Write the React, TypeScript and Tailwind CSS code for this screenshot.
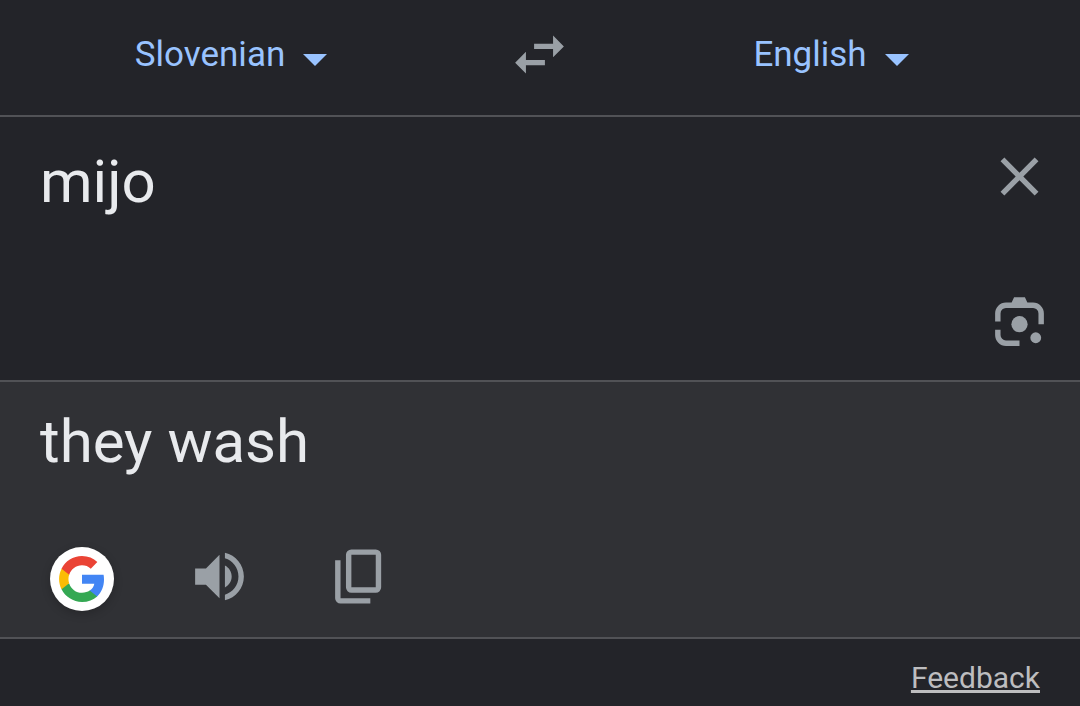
import { useState } from "react";

const LANGUAGES = ["English", "Slovenian", "Spanish", "German", "Croatian"];

interface LanguageSelectProps {
  label: string;
  value: string;
  onChange: (value: string) => void;
}

/** Borderless language drop-down with a solid caret */
function LanguageSelect({ label, value, onChange }: LanguageSelectProps) {
  return (
    <label className="flex flex-1 items-center justify-center pr-4">
      <span className="relative flex items-center">
        <select
          aria-label={label}
          value={value}
          onChange={(e) => onChange(e.target.value)}
          className="field-sizing-content cursor-pointer appearance-none bg-transparent pr-11 text-[35px] leading-[42px] text-[#99c3ff] outline-none"
        >
          {LANGUAGES.map((l) => (
            <option key={l} value={l}>
              {l}
            </option>
          ))}
        </select>
        <svg viewBox="0 0 24 12" className="pointer-events-none absolute right-0.5 bottom-[10px] h-3 w-6 fill-[#99c3ff]">
          <path d="M0 0h24L12 12z" />
        </svg>
      </span>
    </label>
  );
}

function IconButton({ label, onClick, children }: { label: string; onClick?: () => void; children: React.ReactNode }) {
  return (
    <button type="button" aria-label={label} onClick={onClick} className="shrink-0 cursor-pointer text-[#9aa0a6]">
      {children}
    </button>
  );
}

function GoogleLogo() {
  return (
    <svg viewBox="0 0 24 24" className="size-[50px]">
      <path
        fill="#4285f4"
        d="M22.56 12.25c0-.78-.07-1.53-.2-2.25H12v4.26h5.92c-.26 1.37-1.04 2.53-2.21 3.31v2.77h3.57c2.08-1.92 3.28-4.74 3.28-8.09z"
      />
      <path
        fill="#34a853"
        d="M12 23c2.97 0 5.46-.98 7.28-2.66l-3.57-2.77c-.98.66-2.23 1.06-3.71 1.06-2.86 0-5.29-1.93-6.16-4.53H2.18v2.84C3.99 20.53 7.7 23 12 23z"
      />
      <path
        fill="#fbbc05"
        d="M5.84 14.09c-.22-.66-.35-1.36-.35-2.09s.13-1.43.35-2.09V7.07H2.18C1.43 8.55 1 10.22 1 12s.43 3.45 1.18 4.93l3.66-2.84z"
      />
      <path
        fill="#ea4335"
        d="M12 5.38c1.62 0 3.06.56 4.21 1.64l3.15-3.15C17.45 2.09 14.97 1 12 1 7.7 1 3.99 3.47 2.18 7.07l3.66 2.84c.87-2.6 3.3-4.53 6.16-4.53z"
      />
    </svg>
  );
}

export default function App() {
  const [source, setSource] = useState("Slovenian");
  const [target, setTarget] = useState("English");
  const [text, setText] = useState("mijo");

  const swap = () => {
    setSource(target);
    setTarget(source);
  };

  return (
    <div className="flex min-h-screen flex-col bg-[#232429] font-[Roboto,sans-serif] text-[#e8eaed]">
      {/* Language bar */}
      <header className="flex items-center border-b-2 border-[#515256] pt-[22px] pb-7">
        <LanguageSelect label="Source language" value={source} onChange={setSource} />
        <div className="flex w-[120px] justify-center pr-0.5">
          <IconButton label="Swap languages" onClick={swap}>
            <svg viewBox="0 0 24 24" fill="currentColor" className="size-[65px]">
              <path d="M6.99 11L3 15l3.99 4v-3H14v-2H6.99v-3zM21 9l-3.99-4v3H10v2h7.01v3L21 9z" />
            </svg>
          </IconButton>
        </div>
        <LanguageSelect label="Target language" value={target} onChange={setTarget} />
      </header>

      {/* Source text */}
      <section className="flex border-b-2 border-[#515256] pt-[27px] pr-7 pb-[26px] pl-10">
        <textarea
          aria-label="Text to translate"
          value={text}
          onChange={(e) => setText(e.target.value)}
          spellCheck={false}
          rows={1}
          className="min-w-0 flex-1 resize-none bg-transparent pt-0.5 text-[60px] leading-[72px] outline-none"
        />
        <div className="flex flex-col gap-20">
          <IconButton label="Clear text" onClick={() => setText("")}>
            <svg viewBox="0 0 24 24" fill="currentColor" className="size-[65px]">
              <path d="M19 6.41L17.59 5 12 10.59 6.41 5 5 6.41 10.59 12 5 17.59 6.41 19 12 13.41 17.59 19 19 17.59 13.41 12z" />
            </svg>
          </IconButton>
          <IconButton label="Translate from image">
            <svg viewBox="0 0 24 24" fill="currentColor" className="size-[65px]">
              <path d="M3 12V9a4 4 0 0 1 4-4h2.100l.9-2h4l.9 2H17a4 4 0 0 1 4 4v4h-2V9a2 2 0 0 0-2-2H7a2 2 0 0 0-2 2v3z" />
              <path d="M3 15h2v2a2 2 0 0 0 2 2h5v2H7a4 4 0 0 1-4-4z" />
              <circle cx="12" cy="13" r="3" />
              <circle cx="18" cy="18" r="2" />
            </svg>
          </IconButton>
        </div>
      </section>

      {/* Translation */}
      <section className="border-b-2 border-[#515256] bg-[#303135] px-10 pt-6 pb-[26px]">
        <p className="text-[60px] leading-[72px]">they wash</p>
        <div className="mt-[66px] flex items-end pl-[10px]">
          <button
            type="button"
            aria-label="Search with Google"
            className="flex size-16 cursor-pointer items-center justify-center rounded-full bg-white shadow-[0_3px_10px_rgba(0,0,0,0.2)]"
          >
            <GoogleLogo />
          </button>
          <div className="ml-[73px] flex gap-[75px] pb-0.5">
            <IconButton label="Listen">
              <svg viewBox="0 0 24 24" fill="currentColor" className="size-[65px]">
                <path d="M3 9v6h4l5 5V4L7 9H3zm13.500 3c0-1.770-1.020-3.290-2.500-4.030v8.050c1.480-.730 2.500-2.250 2.500-4.020zM14 3.230v2.060c2.890.86 5 3.540 5 6.710s-2.110 5.850-5 6.710v2.060c4.010-.91 7-4.490 7-8.770s-2.990-7.860-7-8.770z" />
              </svg>
            </IconButton>
            <IconButton label="Copy translation">
              <svg viewBox="0 -960 960 960" fill="currentColor" className="size-[65px]">
                <path d="M360-240q-33 0-56.500-23.500T280-320v-480q0-33 23.500-56.500T360-880h360q33 0 56.500 23.500T800-800v480q0 33-23.500 56.500T720-240H360Zm0-80h360v-480H360v480ZM200-80q-33 0-56.500-23.500T120-160v-560h80v560h440v80H200Z" />
              </svg>
            </IconButton>
          </div>
        </div>
      </section>

      <footer className="flex justify-end px-10 pt-[21px] pb-2">
        <a
          href="#feedback"
          className="text-[30px] leading-9 text-[#bdbdbf] underline decoration-[3px] underline-offset-2 [text-decoration-skip-ink:none]"
        >
          Feedback
        </a>
      </footer>
    </div>
  );
}
